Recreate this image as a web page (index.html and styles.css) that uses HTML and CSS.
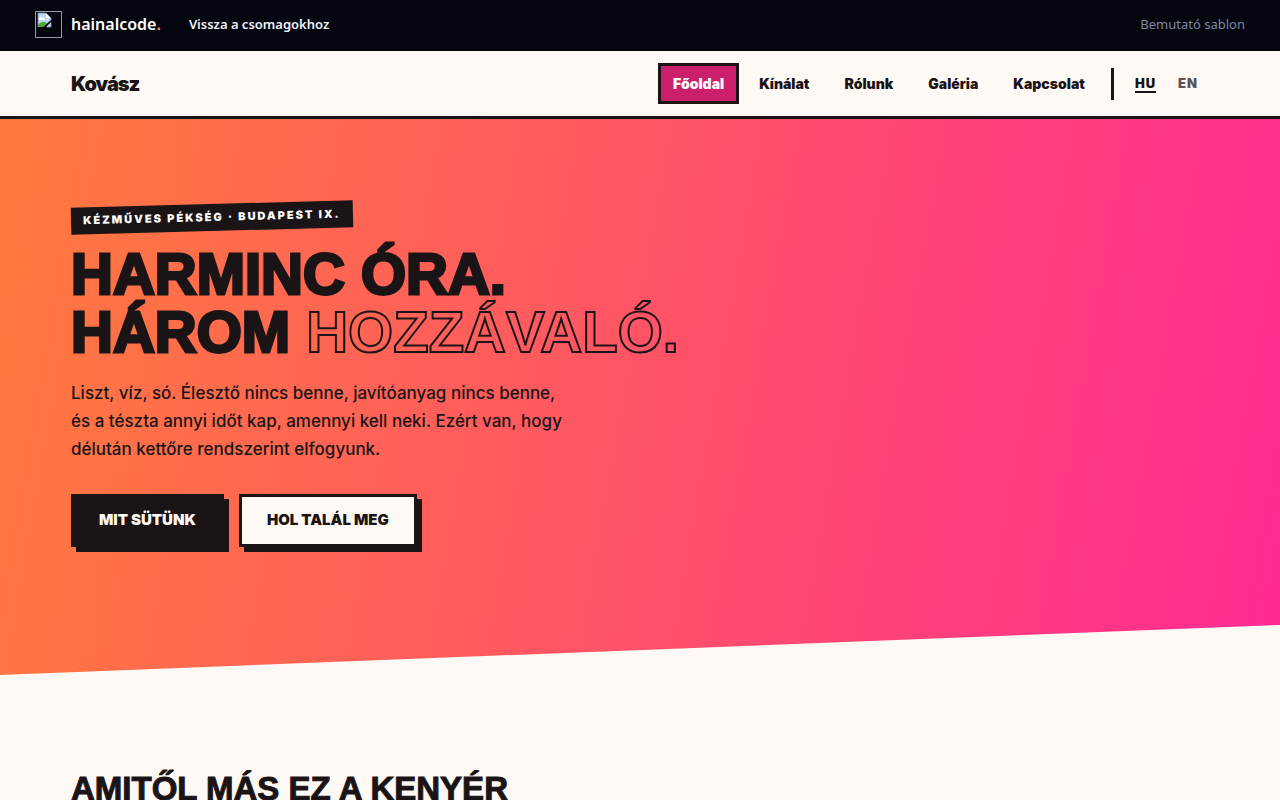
FILE: index.html
```html
<!doctype html>
<html lang="hu">
<head>
<meta charset="utf-8">
<meta name="viewport" content="width=device-width, initial-scale=1">
<title>Kovász</title>
<link rel="stylesheet" href="styles.css">
</head>

<body>
	<div class="topbar">
		<a class="brand" href="#">
			<svg class="brand-mark" viewBox="0 0 27 27" aria-hidden="true">
				<path d="M.5 .5h26v26H.5z" fill="none" stroke="#9a9ca3"/>
				<path d="M3 2h8l5 5v9H3z" fill="#c3d5f5"/>
				<path d="M11 2v5h5z" fill="#fff"/>
				<path d="M4 8c0-2 3-3 4-1 2 0 2 2 1 2H4z" fill="#fff"/>
				<path d="M3 16v-2c3-4 6-4 9-2l-4 4z" fill="#4caf3d"/>
				<path d="M8 16l8-7v2l-5 5z" fill="#03060f"/>
				<path d="M3 16V2h8l5 5v2M12 16h4v-4" fill="none" stroke="#8b8f98" stroke-width=".8"/>
			</svg>
			<span>hainalcode<span class="dot">.</span></span>
		</a>
		<a class="back" href="#">Vissza a csomagokhoz</a>
		<span class="note">Bemutató sablon</span>
	</div>

	<header class="header">
		<a class="logo" href="#">Kovász</a>
		<nav class="nav">
			<a class="active" href="#">Főoldal</a>
			<a href="#">Kínálat</a>
			<a href="#">Rólunk</a>
			<a href="#">Galéria</a>
			<a href="#">Kapcsolat</a>
		</nav>
		<div class="lang">
			<a class="current" href="#">HU</a>
			<a href="#">EN</a>
		</div>
	</header>

	<main>
		<section class="hero">
			<p class="tag">Kézműves pékség · Budapest IX.</p>
			<h1>Harminc óra.<br>Három <span class="outline">hozzávaló.</span></h1>
			<p class="lead">Liszt, víz, só. Élesztő nincs benne, javítóanyag nincs benne,<br>és a tészta annyi időt kap, amennyi kell neki. Ezért van, hogy<br>délután kettőre rendszerint elfogyunk.</p>
			<div class="actions">
				<a class="btn btn-dark" href="#">Mit sütünk</a>
				<a class="btn" href="#">Hol talál meg</a>
			</div>
		</section>
		<section class="why">
			<h2>Amitől más ez a kenyér</h2>
		</section>
	</main>
</body>
</html>
```
FILE: styles.css
```css
*{
	box-sizing:border-box;
	margin:0;
	padding:0;
}
body{
	background:#fff9f5;
	color:#1a1416;
	font-family:Inter, "Liberation Sans", sans-serif;
	overflow-x:hidden;
}
a{
	color:inherit;
	text-decoration:none;
}
h1, h2{
	font-family:"Liberation Sans", Arial, sans-serif;
	font-weight:700;
	text-transform:uppercase;
}

/* top bar */
.topbar{
	display:flex;
	align-items:center;
	height:51px;
	padding:0 35px 3px;
	background:#03060f;
	color:#eef1f8;
	font:600 13px/20px "Noto Sans", sans-serif;
}
.brand{
	display:flex;
	align-items:center;
	gap:9px;
	margin-right:28px;
	font-size:16px;
	color:#fff;
}
.brand-mark{
	width:27px;
	height:27px;
}
.dot{
	color:#ff9a4d;
}
.note{
	margin-left:auto;
	font-weight:400;
	color:#7f86a3;
}

/* header */
.header{
	display:flex;
	align-items:center;
	padding:12px 71px;
	border-bottom:3px solid #1a1416;
}
.logo{
	font-size:20px;
	font-weight:900;
	letter-spacing:-1px;
}
.nav{
	display:flex;
	gap:5px;
	margin-left:auto;
	font-size:14px;
	line-height:19px;
	font-weight:900;
}
.nav a{
	padding:8px 12px;
	border:3px solid transparent;
}
.nav .active{
	background:#cc1f6b;
	border-color:#1a1416;
	color:#fff;
}
.lang{
	display:flex;
	align-items:center;
	margin-left:11px;
	padding-left:10px;
	height:32px;
	border-left:3px solid #1a1416;
	font-size:13px;
	line-height:16px;
	font-weight:900;
	letter-spacing:1px;
}
.lang a{
	margin:0 11px;
	border-bottom:2px solid transparent;
	color:#5a5254;
}
.lang .current{
	border-color:#1a1416;
	color:#1a1416;
}

/* hero */
.hero{
	padding:85px 71px 128px;
	background:linear-gradient(100deg, #ff7a3d 0%, #ff5a5f 42%, #ff2a93 100%);
	clip-path:polygon(0 0, 100% 0, 100% 91%, 0 100%);
}
.tag{
	width:fit-content;
	padding:5px 12px;
	background:#1a1416;
	color:#fff;
	font-size:11px;
	line-height:17px;
	font-weight:900;
	letter-spacing:2px;
	text-transform:uppercase;
	transform:rotate(-1.5deg);
}
h1{
	margin-top:14px;
	font-size:58px;
	line-height:58px;
	-webkit-text-stroke:3px #1a1416;
}
.outline{
	color:transparent;
	-webkit-text-stroke:2px #1a1416;
}
.lead{
	margin-top:18px;
	font-size:17px;
	line-height:28px;
	font-weight:500;
}
.actions{
	display:flex;
	gap:15px;
	margin-top:31px;
}
.btn{
	padding:13px 25px 14px;
	border:3px solid #1a1416;
	background:#fff9f5;
	box-shadow:5px 5px 0 #1a1416;
	font-size:15px;
	line-height:20px;
	font-weight:900;
	text-transform:uppercase;
}
.btn-dark{
	background:#1a1416;
	color:#fff9f5;
}

/* why */
.why{
	padding:96px 71px;
}
h2{
	font-size:33px;
	line-height:35px;
	-webkit-text-stroke:1px #1a1416;
}
```
